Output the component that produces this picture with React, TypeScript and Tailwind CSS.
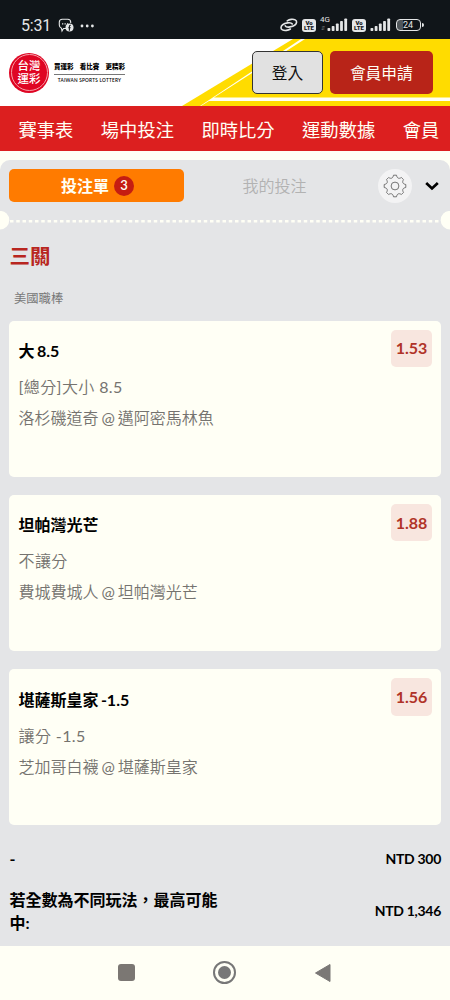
import type { ReactNode } from 'react'

const navItems = ['賽事表', '場中投注', '即時比分', '運動數據', '會員']

const bets = [
  { pick: '大 8.5', market: '[總分]大小 8.5', match: '洛杉磯道奇 @ 邁阿密馬林魚', odds: '1.53' },
  { pick: '坦帕灣光芒', market: '不讓分', match: '費城費城人 @ 坦帕灣光芒', odds: '1.88' },
  { pick: '堪薩斯皇家 -1.5', market: '讓分 -1.5', match: '芝加哥白襪 @ 堪薩斯皇家', odds: '1.56' },
]

function Signal() {
  return (
    <svg width="21" height="14" viewBox="0 0 21 14" fill="#e4e6e7">
      <rect x="0.5" y="10" width="2.8" height="3" rx="0.8" />
      <rect x="4.7" y="8" width="2.8" height="5" rx="0.8" />
      <rect x="8.9" y="5.5" width="2.8" height="7.5" rx="0.8" />
      <rect x="13.1" y="3" width="2.8" height="10" rx="0.8" />
      <rect x="17.3" y="0.5" width="2.8" height="12.5" rx="0.8" />
    </svg>
  )
}

function VoLte() {
  return (
    <div className="flex h-[13px] w-[14px] flex-col items-center justify-center rounded-[3px] bg-[#e4e6e7] font-['Roboto',sans-serif] text-[6px] leading-[5.5px] font-black text-[#101519]">
      <span>Vo</span>
      <span>LTE</span>
    </div>
  )
}

function StatusBar() {
  return (
    <div className="flex h-[39px] items-start justify-between bg-[#101519] pt-[15px] pr-[26.5px] pl-[21px] font-['Roboto',sans-serif] text-[#e4e6e7]">
      <div className="flex h-[21px] items-center">
        <span className="w-[30px] text-[16px] leading-5 tracking-[-0.2px]">5:31</span>
        <svg className="ml-[7px]" width="17" height="16" viewBox="0 0 17 16" fill="none">
          <path d="M8 10.5H5.5L4 13l-.6-2.8C2 9.6 1.3 8.7 1.3 7V4.3C1.3 2.4 2.5 1.3 4.3 1.3h5.4c1.8 0 3 1.1 3 3V5" stroke="#e4e6e7" strokeWidth="1.1" />
          <path d="M4 5.8h1.3M6.5 5.8h1.3M9 5.8h1" stroke="#e4e6e7" strokeWidth="1.3" />
          <circle cx="11.5" cy="9.5" r="4" fill="#e4e6e7" />
          <path d="M12.8 7.2h-.5c-.6 0-.9.3-.9 1v4.6M10.2 9.7h2.5" stroke="#101519" strokeWidth="1.1" />
        </svg>
        <svg className="ml-[5px]" width="15" height="4" viewBox="0 0 15 4" fill="#e4e6e7">
          <circle cx="2" cy="2" r="1.4" />
          <circle cx="7.2" cy="2" r="1.4" />
          <circle cx="12.4" cy="2" r="1.4" />
        </svg>
      </div>
      <div className="flex h-5 items-center">
        {/* Link icon */}
        <svg width="18" height="14" viewBox="0 0 18 14" fill="none" stroke="#e4e6e7" strokeWidth="1.6" strokeLinecap="round">
          <path d="M5.3 7.8c.6 1.1 2.4 1.5 4.6 1.1 3.6-.6 6.5-2.6 6.7-4.7.2-2-2.2-3.2-5.4-2.8-1.5.2-2.9.7-4 1.4" />
          <path d="M12.3 6c-.7-1.1-2.5-1.5-4.7-1.1C4 5.5 1.2 7.5 1 9.6c-.2 2 2.2 3.2 5.4 2.8 1.5-.2 2.9-.7 4-1.4" />
        </svg>
        <div className="ml-1">
          <VoLte />
        </div>
        <div className="relative ml-[11px]">
          <Signal />
          <span className="absolute -top-[3px] -left-[7px] text-[8px] leading-[10px]">4G</span>
          <span className="absolute top-[7px] -left-[6px] text-[5px] leading-[6px] text-[#70757a]">⇵</span>
        </div>
        <div className="ml-1">
          <VoLte />
        </div>
        <div className="ml-[3.5px]">
          <Signal />
        </div>
        <div className="ml-[5px] flex items-center">
          <div className="flex h-[12px] w-[25px] items-center justify-center rounded-[4px] border border-[#e4e6e7] bg-linear-to-r from-[#50565a] from-24% to-[#101519] to-24% text-[9px] leading-[10px]">
            24
          </div>
          <div className="ml-px h-1 w-[2px] rounded-r-sm bg-[#e4e6e7]" />
        </div>
      </div>
    </div>
  )
}

function Header() {
  return (
    <header className="relative flex h-[67px] items-center bg-white pr-[17.5px] pl-[9px]">
      <svg className="absolute inset-0" width="450" height="67" viewBox="0 0 450 67">
        <path d="M182 67 293 0h157v67z" fill="#ffdc00" />
        <path d="M200 67 301 0h4L214 58.5h236v3.5H209l-8 5z" fill="#fffff5" />
      </svg>
      <div className="relative flex size-10 items-center justify-center rounded-full bg-[#df0523]">
        <div className="absolute inset-[1.5px] rounded-full border border-[#f7a0a8]" />
        <div className="text-center text-[11.5px] leading-[12.5px] font-medium text-white">
          台灣
          <br />
          運彩
        </div>
      </div>
      <div className="relative ml-[5px] w-[71px] text-black">
        <div className="flex h-[13px] items-center justify-between border-b border-[#777] pb-[3px] text-[6.5px] leading-[8px] font-black whitespace-nowrap">
          <span>買運彩</span>
          <span>看比賽</span>
          <span>更精彩</span>
        </div>
        <div className="pt-0.5 text-center text-[4.7px] leading-[6px] font-semibold tracking-[0.25px] whitespace-nowrap">TAIWAN SPORTS LOTTERY</div>
      </div>
      <button className="relative ml-auto h-[43px] w-[71px] rounded-[5px] border border-[#333] bg-[#e1e1e1] pt-0.5 text-[15.7px] text-[#111]">
        登入
      </button>
      <button className="relative ml-[7px] h-[43px] w-[102.5px] rounded-[5px] bg-[#b82418] pt-0.5 text-[15.7px] text-[#fffff5]">
        會員申請
      </button>
    </header>
  )
}

function SlipRow({ label, children }: { label: string; children: ReactNode }) {
  return (
    <div className="flex items-center justify-between">
      <span className="w-[215px] pl-[0.5px] text-[16px] leading-[23.5px] font-bold">{label}</span>
      <span className="text-[14px] leading-5 font-bold tracking-[-0.3px]">{children}</span>
    </div>
  )
}

export default function App() {
  return (
    <div className="flex h-[1000px] w-[450px] flex-col overflow-hidden bg-[#fffff5] font-['Lato','Noto_Sans_CJK_TC',sans-serif]">
      <StatusBar />
      <Header />

      <nav className="flex h-[45px] shrink-0 items-center gap-[27.5px] bg-[#dc1f1f] pt-[4px] pl-[18.5px] text-[18.3px] whitespace-nowrap text-[#fffff5]">
        {navItems.map((item) => (
          <a key={item} className="shrink-0">
            {item}
          </a>
        ))}
      </nav>

      <main className="mt-[9px] flex h-[785.5px] shrink-0 flex-col overflow-hidden rounded-t-[10px] bg-[#e4e5e7]">
        {/* Tabs */}
        <div className="flex h-[51px] shrink-0 items-center pr-[10px] pl-[9px]">
          <button className="flex h-[33px] w-[175px] items-center justify-center rounded-[5px] bg-[#ff7b00] pl-[2px] text-[16px] font-bold text-[#fffff5]">
            投注單
            <span className="ml-[5px] flex size-5 items-center justify-center rounded-full bg-[#c51d12] text-[13px] font-semibold">3</span>
          </button>
          <button className="w-[181px] text-center text-[16px] font-[350] text-[#b2b2b2]">我的投注</button>
          <button className="ml-[12.5px] flex size-[34px] items-center justify-center rounded-full bg-[#f3f3f4]">
            <svg width="24" height="24" viewBox="0 0 24 24" fill="none" stroke="#666" strokeWidth="0.9">
              <path d="M10.5 1.2h3c.5 2.9 2.2 4 4.9 2.3l2.1 2.1c-1.7 2.7-.6 4.4 2.3 4.9v3c-2.9.5-4 2.2-2.3 4.9l-2.1 2.1c-2.7-1.7-4.4-.6-4.9 2.3h-3c-.5-2.9-2.2-4-4.9-2.3l-2.1-2.1c1.7-2.7.6-4.4-2.3-4.9v-3c2.9-.5 4-2.2 2.3-4.9l2.1-2.1c2.7 1.7 4.4.6 4.9-2.3z" strokeLinejoin="round" />
              <circle cx="12" cy="12" r="3.9" />
            </svg>
          </button>
          <svg className="mt-px ml-[13px]" width="14" height="10" viewBox="0 0 14 10" fill="none" stroke="#000" strokeWidth="2.7">
            <path d="m1.2 2 5.8 5.5L12.8 2" />
          </svg>
        </div>

        {/* Perforated divider */}
        <svg className="shrink-0" width="450" height="20" viewBox="0 0 450 20">
          <path d="M10 10.3h430" stroke="#fffff5" strokeWidth="2.4" strokeDasharray="3.5 2.75" />
          <circle cx="0" cy="9.2" r="9.3" fill="#fffff5" />
          <circle cx="450" cy="9.2" r="9.3" fill="#fffff5" />
        </svg>

        <div className="flex flex-col px-[9px] pt-[11px]">
          <h2 className="pl-[0.5px] text-[20.5px] leading-[28px] font-bold text-[#b82620]">三關</h2>
          <p className="mt-[18.5px] pl-[5px] text-[12.3px] leading-5 text-[#777]">美國職棒</p>

          <div className="mt-[12px] flex flex-col gap-[18.4px]">
            {bets.map((bet) => (
              <article key={bet.pick} className="flex h-[156px] justify-between rounded-[5px] bg-[#fffff5] p-[9px]">
                <div className="pt-[9.5px] pl-[0.5px]">
                  <h3 className="text-[16px] leading-6 font-bold text-black [word-spacing:-1.5px]">{bet.pick}</h3>
                  <p className="mt-[12px] font-['Lato','Noto_Sans_CJK_TC_DemiLight','Noto_Sans_CJK_TC',sans-serif] text-[16px] leading-6 tracking-[0.4px] text-[#75736f]">{bet.market}</p>
                  <p className="mt-[7px] font-['Lato','Noto_Sans_CJK_TC_DemiLight','Noto_Sans_CJK_TC',sans-serif] text-[16px] leading-6 text-[#75736f] [word-spacing:-1.2px]">{bet.match}</p>
                </div>
                <span className="flex h-[37.5px] w-[41px] items-center justify-center rounded-[5px] bg-[#f8e6df] text-[16px] font-bold text-[#b03328]">
                  {bet.odds}
                </span>
              </article>
            ))}
          </div>

          <div className="mt-[22px] flex flex-col gap-[17px] text-black">
            <SlipRow label="-">NTD 300</SlipRow>
            <SlipRow label="若全數為不同玩法，最高可能中:">NTD 1,346</SlipRow>
          </div>
        </div>
      </main>

      {/* System navigation */}
      <div className="flex h-[54px] shrink-0 items-center justify-between pr-[119.5px] pl-[118px]">
        <div className="size-[17px] rounded-[3px] bg-[#7b7773]" />
        <div className="flex size-[23px] items-center justify-center rounded-full border-2 border-[#777]">
          <div className="size-[13px] rounded-full bg-[#777]" />
        </div>
        <svg width="17" height="20" viewBox="0 0 17 20">
          <path d="M1.5 10 16 1.5v17z" fill="#7b7876" stroke="#7b7876" strokeLinejoin="round" />
        </svg>
      </div>
    </div>
  )
}
